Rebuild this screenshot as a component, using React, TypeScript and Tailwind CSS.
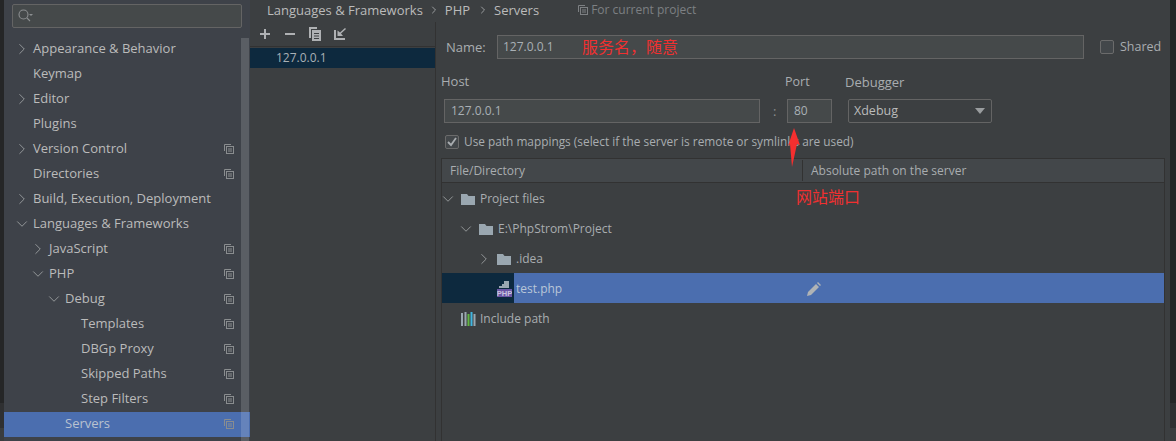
import type { ReactNode } from "react";
import { ChevronDown, ChevronRight } from "lucide-react";

const treeItems = [
  { label: "Appearance & Behavior", indent: 0, arrow: "right", copy: false },
  { label: "Keymap", indent: 0, arrow: "", copy: false },
  { label: "Editor", indent: 0, arrow: "right", copy: false },
  { label: "Plugins", indent: 0, arrow: "", copy: false },
  { label: "Version Control", indent: 0, arrow: "right", copy: true },
  { label: "Directories", indent: 0, arrow: "", copy: true },
  { label: "Build, Execution, Deployment", indent: 0, arrow: "right", copy: false },
  { label: "Languages & Frameworks", indent: 0, arrow: "down", copy: false },
  { label: "JavaScript", indent: 16, arrow: "right", copy: true },
  { label: "PHP", indent: 16, arrow: "down", copy: true },
  { label: "Debug", indent: 32, arrow: "down", copy: true },
  { label: "Templates", indent: 48, arrow: "", copy: true },
  { label: "DBGp Proxy", indent: 48, arrow: "", copy: true },
  { label: "Skipped Paths", indent: 48, arrow: "", copy: true },
  { label: "Step Filters", indent: 48, arrow: "", copy: true },
  { label: "Servers", indent: 32, arrow: "", copy: true, selected: true },
];

function CopyIcon({ className = "text-[#8a8d8f]" }: { className?: string }) {
  return (
    <svg width="10" height="10" viewBox="0 0 10 10" fill="none" stroke="currentColor" className={className}>
      <path d="M.5 7V.5H7" />
      <rect x="2.5" y="2.5" width="7" height="7" />
      <path d="M4 5h4M4 7h4" />
    </svg>
  );
}

function Folder() {
  return (
    <svg width="14" height="12" viewBox="0 0 14 12" fill="#9aa7b0">
      <path d="M0 1h6l1.500 2H14v9H0z" />
    </svg>
  );
}

function Arrow({ open }: { open: boolean }) {
  const Icon = open ? ChevronDown : ChevronRight;
  return <Icon size={18} strokeWidth={1.1} className="-ml-[4px] shrink-0 text-[#a4a7a9]" />;
}

// the dark window behind the dialog, visible at both edges
function WindowEdge({ className }: { className: string }) {
  return (
    <div className={`flex shrink-0 flex-col ${className}`}>
      <div className="flex-1 bg-[#252627]" />
      <div className="h-[25px] bg-[#2f3032]" />
      <div className="h-[13px] bg-[#3a3c3e]" />
    </div>
  );
}

function Sidebar() {
  return (
    <aside className="relative flex w-[246px] shrink-0 flex-col bg-[#3e4249]">
      <div className="px-2 pt-1">
        <div className="flex h-[24px] w-[230px] items-center rounded-[2px] border border-[#646464] bg-[#45494a] pl-[5px]">
          <svg width="16" height="14" viewBox="0 0 16 14" fill="none" stroke="#8c8f91" strokeWidth="1.1">
            <circle cx="5.500" cy="5.500" r="4.500" />
            <path d="M9 9l3 3" />
            <path d="M11 5h4l-2 2z" fill="#8c8f91" stroke="none" />
          </svg>
        </div>
      </div>
      <nav className="mt-[9px]">
        {treeItems.map((item) => (
          <div
            key={item.label}
            className={`flex h-[25px] items-center pb-[2px] pr-[16px] ${item.selected ? "bg-[#4b6eaf]" : ""}`}
            style={{ paddingLeft: 13 + item.indent }}
          >
            <span className="flex w-[16px] shrink-0 items-center">
              {item.arrow && <Arrow open={item.arrow === "down"} />}
            </span>
            <span className={`flex-1 ${item.selected ? "text-[#b9c2cf]" : "text-[#bbbbbb]"}`}>{item.label}</span>
            {item.copy && <CopyIcon />}
          </div>
        ))}
      </nav>
      <div className="absolute right-[1px] bottom-0 top-[38px] w-[8px] bg-[#ffffff]/15" />
    </aside>
  );
}

function Field({ value, className }: { value: string; className: string }) {
  return (
    <div className={`flex h-[24px] items-center border border-[#646464] bg-[#45494a] text-[12px] text-[#a9b0b5] ${className}`}>
      {value}
    </div>
  );
}

function TreeRow({
  indent,
  open,
  icon,
  label,
  selected,
}: {
  indent: number;
  open?: boolean;
  icon: ReactNode;
  label: string;
  selected?: boolean;
}) {
  return (
    <div className={`relative flex h-[30px] items-center pt-[2px] ${selected ? "bg-[#4b6eaf]" : ""}`} style={{ paddingLeft: indent }}>
      {selected && <div className="absolute inset-y-0 left-0 w-[72px] bg-[#0d293e]" />}
      <span className="flex w-[18px] shrink-0 items-center">
        {open !== undefined && <Arrow open={open} />}
      </span>
      <span className="relative flex w-[19px] shrink-0 items-center">{icon}</span>
      <span className={`relative ${selected ? "text-[#b9c6d8]" : "text-[#a9adb0]"}`}>{label}</span>
      {selected && (
        <svg width="14" height="14" viewBox="0 0 14 14" fill="#b0b3b5" className="absolute left-[365px]">
          <path d="M0 14l1-4 8-8 3 3-8 8zM10 1l1-1 3 3-1 1z" />
        </svg>
      )}
    </div>
  );
}

function MappingTable() {
  return (
    <div className="mt-[8px] flex flex-1 flex-col text-[12px]">
      <div className="mr-[5px] flex-1 border-x border-t border-[#323232]">
        <div className="flex h-[24px] items-center border-b border-[#323232] bg-[#43474a] text-[#a9adb0]">
          <div className="flex h-[21px] w-[361px] items-center border-r border-[#323232] pl-2">File/Directory</div>
          <div className="pl-2">Absolute path on the server</div>
        </div>
        <TreeRow indent={1} open icon={<Folder />} label="Project files" />
        <TreeRow indent={19} open icon={<Folder />} label="E:\PhpStrom\Project" />
        <TreeRow indent={37} open={false} icon={<Folder />} label=".idea" />
        <TreeRow
          indent={37}
          icon={
            <svg width="15" height="16" viewBox="0 0 15 16">
              <path d="M7 0h5v7H2V5h3V3h2z" fill="#9aa7b0" />
              <rect x="0" y="8" width="15" height="8" fill="#6b57a5" />
              <text x="7.500" y="15" fontSize="7.500" fontWeight="700" textAnchor="middle" fill="#c9c4de" fontFamily="Liberation Sans, sans-serif">PHP</text>
            </svg>
          }
          label="test.php"
          selected
        />
        <div className="flex h-[30px] items-center pl-[19px] pt-[2px] text-[#a9adb0]">
          <svg width="15" height="14" viewBox="0 0 15 14" className="mr-[4px]">
            <rect x="0" y="1" width="2" height="13" fill="#9aa7b0" />
            <rect x="3.500" y="0" width="2" height="14" fill="#9aa7b0" />
            <rect x="6.500" y="2" width="2" height="12" fill="#62b543" />
            <rect x="9.500" y="0" width="2" height="14" fill="#40b6e0" />
            <rect x="12.500" y="2" width="2" height="12" fill="#9aa7b0" />
          </svg>
          Include path
        </div>
      </div>
    </div>
  );
}

export default function App() {
  return (
    <div
      className="relative flex h-[441px] w-[1176px] overflow-hidden bg-[#3c3f41] text-[13px] leading-none"
      style={{ fontFamily: '"Open Sans", "Noto Sans CJK SC", sans-serif' }}
    >
      <WindowEdge className="w-[4px]" />
      <Sidebar />
      <main className="flex min-w-0 flex-1 flex-col">
        <header className="flex h-[22px] shrink-0 items-center pb-[2px] pl-[17px] text-[#bbbbbb]">
          <span>Languages &amp; Frameworks</span>
          <ChevronRight size={12} className="ml-[5px] mr-[5px] text-[#9a9d9f]" />
          <span>PHP</span>
          <ChevronRight size={12} className="ml-[7px] mr-[5px] text-[#9a9d9f]" />
          <span>Servers</span>
          <span className="ml-[39px] flex items-center gap-[3px] text-[12px] text-[#7d8083]">
            <CopyIcon className="text-[#7d8083]" />
            For current project
          </span>
        </header>
        <div className="flex min-h-0 flex-1">
          <section className="w-[186px] shrink-0 border-r border-[#323232]">
            <div className="flex h-[25px] items-center gap-[11px] border-b border-[#323232] pl-[8px]">
              <svg width="14" height="14" viewBox="0 0 14 14" fill="#afb1b3"><path d="M6 2h2v4h4v2H8v4H6V8H2V6h4z" /></svg>
              <svg width="14" height="14" viewBox="0 0 14 14" fill="#afb1b3"><path d="M2 6h10v2H2z" /></svg>
              <svg width="14" height="14" viewBox="0 0 14 14" fill="#afb1b3"><path d="M1 0h8v2H3v9H1z" /><path d="M4 3h9v11H4zM6 6v1h5V6zm0 2.500v1h5v-1zM6 11v1h5v-1z" fillRule="evenodd" /></svg>
              <svg width="14" height="14" viewBox="0 0 14 14" fill="#afb1b3"><path d="M1 3h2v8h9v2H1z" /><path d="M13 2l-5 4.500L10 9H4.500V3.500L7 5.500l5-4.500z" /></svg>
            </div>
            <div className="mt-[1px] flex h-[20px] items-center bg-[#0d293e] pl-[26px] text-[12px] text-[#a9b0b5]">127.0.0.1</div>
          </section>
          <section className="flex min-w-0 flex-1 flex-col pl-[5px]">
            <div className="mt-[13px] flex items-center">
              <span className="ml-[5px] w-[51px] text-[#a9adb0]">Name:</span>
              <Field value="127.0.0.1" className="w-[587px] pl-[5px]" />
              <span className="ml-[16px] h-[14px] w-[14px] rounded-[2px] border border-[#6b6b6b] bg-[#43474a]" />
              <span className="ml-[6px] mt-[1px] text-[12.500px] text-[#a9adb0]">Shared</span>
            </div>
            <div className="mt-[16px] flex items-start text-[#a9adb0]">
              <div className="flex w-[344px] flex-col">
                <span className="h-[24px]">Host</span>
                <div className="flex items-center">
                  <Field value="127.0.0.1" className="ml-[3px] w-[316px] pl-[6px]" />
                  <span className="ml-[13px] text-[#8a8d8f]">:</span>
                </div>
              </div>
              <div className="flex w-[60px] flex-col">
                <span className="h-[24px] pt-[1px] text-[12.500px]">Port</span>
                <Field value="80" className="ml-[2px] w-[45px] pl-[6px]" />
              </div>
              <div className="flex flex-col">
                <span className="h-[24px] pt-[1px]">Debugger</span>
                <div className="ml-[3px] flex h-[24px] w-[144px] items-center justify-between rounded-[2px] border border-[#646464] bg-[#3c3f41] pl-[5px] pr-[6px] text-[12.500px] text-[#bbbbbb]">
                  Xdebug
                  <svg width="10" height="6" viewBox="0 0 10 6" fill="#9a9d9f"><path d="M0 0h10L5 6z" /></svg>
                </div>
              </div>
            </div>
            <label className="mt-[11px] flex h-[16px] items-center pl-[4px] text-[11.850px] text-[#a9adb0]">
              <span className="mr-[5px] flex h-[14px] w-[14px] items-center justify-center rounded-[2px] border border-[#6b6b6b] bg-[#43474a]">
                <svg width="10" height="10" viewBox="0 0 10 10" fill="none" stroke="#a9adb0" strokeWidth="1.800"><path d="M1 5l3 3 5-7" /></svg>
              </span>
              Use path mappings (select if the server is remote or symlinks are used)
            </label>
            <MappingTable />
          </section>
        </div>
      </main>
      <WindowEdge className="w-[6px]" />
      {/* red annotations pasted over the screenshot */}
      <span className="absolute left-[582px] top-[39px] text-[16px] text-[#f03030]">服务名，随意</span>
      <span className="absolute left-[796px] top-[189px] text-[16px] text-[#f03030]">网站端口</span>
      <svg width="13" height="40" viewBox="0 0 13 40" className="absolute left-[788px] top-[128px]" fill="#f52f2f">
        <path d="M6 0l6 17-3-1-5 23-2-23-2 2z" />
      </svg>
    </div>
  );
}
